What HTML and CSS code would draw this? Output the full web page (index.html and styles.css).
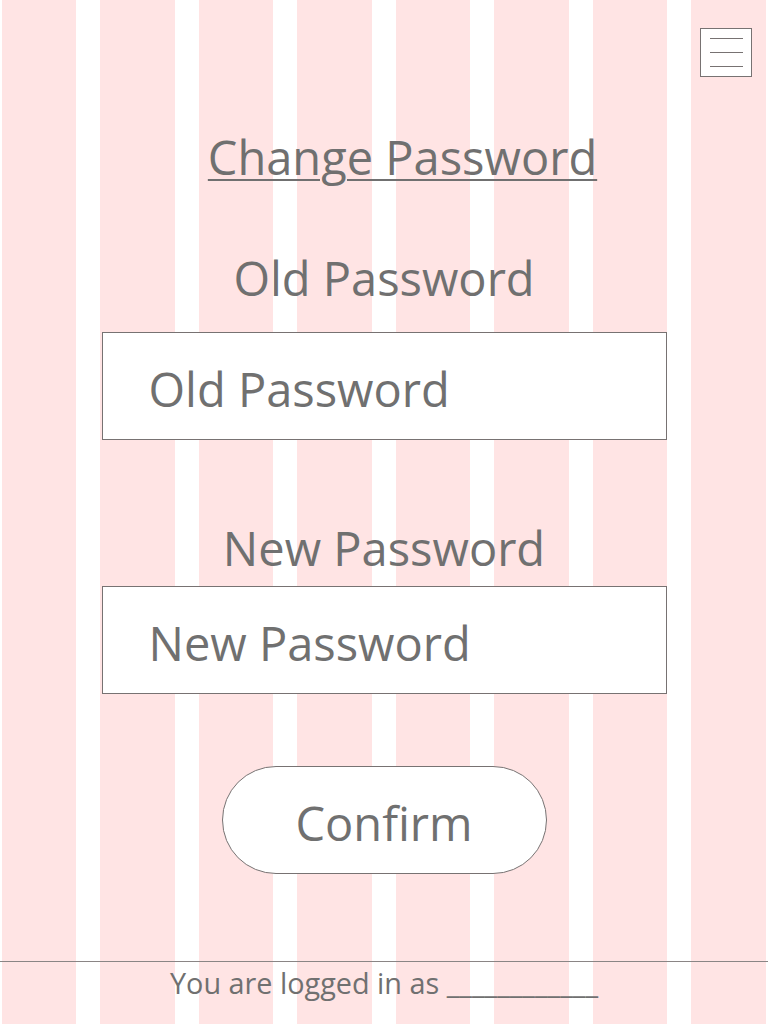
FILE: index.html
```html
<!DOCTYPE html>
<html lang="en">
<head>
<meta charset="utf-8">
<title>Change Password</title>
<link rel="stylesheet" href="styles.css">
</head>
<body>
<div class="page">
  <header class="topbar">
    <button class="menu" type="button" aria-label="Menu">
      <span></span><span></span><span></span>
    </button>
  </header>
  <main class="content">
    <h1 class="title">Change Password</h1>
    <form class="form">
      <label class="label label-old" for="old">Old Password</label>
      <input class="field" id="old" type="password" placeholder="Old Password">
      <label class="label label-new" for="new">New Password</label>
      <input class="field field-new" id="new" type="password" placeholder="New Password">
      <button class="confirm" type="button">Confirm</button>
    </form>
  </main>
  <footer class="footer">You are logged in as ____________</footer>
</div>
</body>
</html>
```

FILE: styles.css
```css
* { box-sizing: border-box; }

html, body {
  margin: 0;
  padding: 0;
}

body {
  font-family: "Open Sans", "Noto Sans", sans-serif;
  color: #707070;
  background-color: #fff;
  background-image: repeating-linear-gradient(90deg, #ffe4e4 0 74.5px, #ffffff 74.5px 98.5px);
  background-position: 2px 0;
  background-size: 764px 100%;
  background-repeat: no-repeat;
}

.page {
  min-height: 1024px;
  display: flex;
  flex-direction: column;
}

.topbar {
  display: flex;
  justify-content: flex-end;
  padding: 28px 16px 0 0;
}

.menu {
  width: 52px;
  height: 49px;
  padding: 9px 0 0 9px;
  margin: 0;
  border: 1px solid #777272;
  background: #fff;
  display: flex;
  flex-direction: column;
  gap: 13px;
  cursor: pointer;
}

.menu span {
  display: block;
  width: 33px;
  height: 1px;
  background: #777272;
}

.content {
  display: flex;
  flex-direction: column;
  align-items: center;
}

.title {
  margin: 52px 0 0;
  padding-left: 37px;
  font-size: 47px;
  line-height: 56px;
  font-weight: 400;
  text-decoration: underline;
  text-decoration-thickness: 2px;
  text-underline-offset: 4px;
}

.form {
  display: flex;
  flex-direction: column;
  align-items: center;
  width: 565px;
}

.label {
  font-size: 47px;
  line-height: 56px;
}

.label-old { margin-top: 65px; }
.label-new { margin-top: 80px; }

.field {
  display: block;
  width: 565px;
  height: 108px;
  margin-top: 26px;
  padding: 5px 0 0 46px;
  border: 1px solid #777272;
  border-radius: 0;
  background: #fff;
  font-family: inherit;
  font-size: 47px;
  line-height: 56px;
  color: #707070;
  outline: none;
}

.field-new { margin-top: 10px; }

.field::placeholder {
  color: #707070;
  opacity: 1;
}

.confirm {
  width: 325px;
  height: 108px;
  margin-top: 72px;
  padding: 5px 0 0;
  border: 1px solid #777272;
  border-radius: 54px;
  background: #fff;
  font-family: inherit;
  font-size: 47px;
  line-height: 56px;
  color: #707070;
  cursor: pointer;
}

.footer {
  margin-top: auto;
  height: 63px;
  border-top: 1px solid #8a8585;
  padding-top: 2px;
  text-align: center;
  font-size: 28.8px;
  line-height: 37px;
}
```
